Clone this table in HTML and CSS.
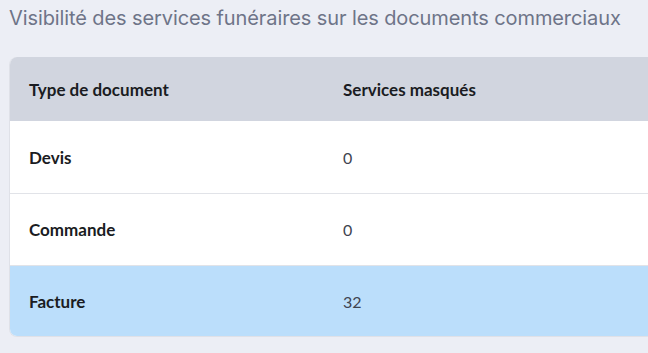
FILE: index.html
```html
<!DOCTYPE html>
<html lang="fr">
<head>
<meta charset="utf-8">
<link rel="stylesheet" href="styles.css">
</head>
<body>
<main class="page">
  <h1 class="title">Visibilité des services funéraires sur les documents commerciaux</h1>
  <div class="table">
    <div class="row head">
      <div class="cell">Type de document</div>
      <div class="cell">Services masqués</div>
    </div>
    <div class="row">
      <div class="cell name">Devis</div>
      <div class="cell num">0</div>
    </div>
    <div class="row">
      <div class="cell name">Commande</div>
      <div class="cell num">0</div>
    </div>
    <div class="row active">
      <div class="cell name">Facture</div>
      <div class="cell num">32</div>
    </div>
  </div>
</main>
</body>
</html>
```
FILE: styles.css
```css
html, body {
  margin: 0;
  padding: 0;
  background: #eceef5;
}
.page {
  padding: 4px 0 0 9px;
}
.title {
  margin: 0;
  font-family: Inter, "Liberation Sans", sans-serif;
  font-weight: 400;
  font-size: 20px;
  line-height: 28px;
  color: #6e7488;
  letter-spacing: -0.1px;
  white-space: nowrap;
}
.table {
  margin-top: 25px;
  border-radius: 8px 0 0 8px;
  border-left: 1px solid #dfe1e8;
  border-bottom: 1px solid #dfe1e8;
  overflow: hidden;
  background: #fff;
  font-family: Lato, "Noto Sans", sans-serif;
  font-size: 17px;
  color: #1a1c22;
}
.row {
  display: grid;
  grid-template-columns: 314px 1fr;
  align-items: center;
  height: 72px;
  border-top: 1px solid #e1e3e8;
  box-sizing: border-box;
}
.row.head {
  height: 64px;
  background: #d1d5df;
  border-top: none;
  font-weight: 700;
}
.row.head + .row {
  border-top: none;
}
.row.active {
  background: #bbdefb;
  height: 71px;
}
.cell {
  padding-left: 19px;
}
.name {
  font-weight: 700;
}
.num {
  color: #3f4450;
  font-size: 16px;
}
```
